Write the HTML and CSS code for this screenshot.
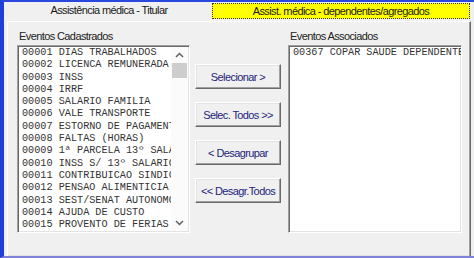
FILE: index.html
```html
<!DOCTYPE html>
<html>
<head>
	<meta charset="utf-8">
	<link rel="stylesheet" href="styles.css">
</head>
<body>
<div class="window">
	<div class="tabs">
		<div class="tab">Assistência médica - Titular</div>
		<div class="tab active"><span>Assist. médica - dependentes/agregados</span></div>
	</div>
	<div class="panel">
		<div class="col col-left">
			<div class="label">Eventos Cadastrados</div>
			<div class="listbox">
				<ul class="items">
					<li>00001 DIAS TRABALHADOS</li>
					<li>00002 LICENCA REMUNERADA</li>
					<li>00003 INSS</li>
					<li>00004 IRRF</li>
					<li>00005 SALARIO FAMILIA</li>
					<li>00006 VALE TRANSPORTE</li>
					<li>00007 ESTORNO DE PAGAMENTO</li>
					<li>00008 FALTAS (HORAS)</li>
					<li>00009 1ª PARCELA 13º SALARIO</li>
					<li>00010 INSS S/ 13º SALARIO</li>
					<li>00011 CONTRIBUICAO SINDICAL</li>
					<li>00012 PENSAO ALIMENTICIA</li>
					<li>00013 SEST/SENAT AUTONOMO</li>
					<li>00014 AJUDA DE CUSTO</li>
					<li>00015 PROVENTO DE FERIAS</li>
				</ul>
				<div class="scrollbar">
					<div class="arrow">
						<svg width="9" height="6" viewBox="0 0 9 6"><polyline points="1,5 4.5,1.5 8,5" fill="none" stroke="#606060" stroke-width="1.5"/></svg>
					</div>
					<div class="track"><div class="thumb"></div></div>
					<div class="arrow">
						<svg width="9" height="6" viewBox="0 0 9 6"><polyline points="1,1 4.5,4.5 8,1" fill="none" stroke="#606060" stroke-width="1.5"/></svg>
					</div>
				</div>
			</div>
		</div>
		<div class="buttons">
			<button class="btn">Selecionar &gt;</button>
			<button class="btn">Selec. Todos &gt;&gt;</button>
			<button class="btn">&lt; Desagrupar</button>
			<button class="btn">&lt;&lt; Desagr.Todos</button>
		</div>
		<div class="col col-right">
			<div class="label">Eventos Associados</div>
			<div class="listbox">
				<ul class="items">
					<li>00367 COPAR SAUDE DEPENDENTE</li>
				</ul>
			</div>
		</div>
	</div>
</div>
</body>
</html>
```

FILE: styles.css
```css
	body {
		margin: 0;
		background: #f0f0f0;
		font-family: "Liberation Sans", Arial, sans-serif;
		font-size: 11px;
		letter-spacing: -0.6px;
		color: #1a1a1a;
	}

	.window {
		box-sizing: border-box;
		width: 474px;
		height: 258px;
		border-left: 4px solid #1f3fdc;
		border-top: 2px solid #2a48e0;
		border-bottom: 2px solid #7f82d8;
		padding-left: 3px;
		background: #f0f0f0;
		display: flex;
		flex-direction: column;
	}

	.tabs {
		display: flex;
		height: 19px;
		padding-left: 1px;
	}

	.tab {
		width: 202px;
		text-align: center;
		line-height: 17px;
	}

	.tab.active {
		width: 258px;
		margin-left: 2px;
		padding-top: 1px;
	}

	.tab.active span {
		display: block;
		height: 14px;
		line-height: 14px;
		background: #ffff00;
		border: 1px dotted #333;
	}

	.panel {
		flex: 1;
		width: 464px;
		box-sizing: border-box;
		border-top: 1px solid #ffffff;
		border-left: 1px solid #ffffff;
		border-right: 1px solid #696969;
		box-shadow: inset -1px 0 #a0a0a0, inset 0 -1px #e3e3e3;
		display: flex;
		padding: 8px 0 0 9px;
	}

	.col {
		display: flex;
		flex-direction: column;
	}

	.col-left {
		width: 173px;
	}

	.col-right {
		width: 174px;
		margin-left: 7px;
	}

	.label {
		height: 15px;
		line-height: 13px;
		padding-left: 2px;
		color: #222;
	}

	.listbox {
		box-sizing: border-box;
		height: 188px;
		background: #ffffff;
		border-top: 1px solid #a0a0a0;
		border-left: 1px solid #a0a0a0;
		border-right: 1px solid #ffffff;
		border-bottom: 1px solid #ffffff;
		box-shadow: inset 1px 1px #696969, inset -1px -1px #e3e3e3;
		display: flex;
		overflow: hidden;
	}

	.items {
		flex: 1;
		list-style: none;
		margin: 0;
		padding: 1px 0 0 4px;
		font-family: "Liberation Mono", "Courier New", monospace;
		font-size: 10.2px;
		letter-spacing: 0;
		line-height: 12.3px;
		color: #333;
		white-space: nowrap;
		overflow: hidden;
	}

	.scrollbar {
		width: 17px;
		margin: 1px 1px 1px 0;
		display: flex;
		flex-direction: column;
		background: #fbfbfb;
	}

	.arrow {
		height: 16px;
		display: flex;
		align-items: center;
		justify-content: center;
	}

	.track {
		flex: 1;
	}

	.thumb {
		height: 15px;
		margin: 0 1px;
		background: #cdcdcd;
	}

	.buttons {
		display: flex;
		flex-direction: column;
		gap: 13px;
		margin-left: 5px;
		padding-top: 34px;
	}

	.btn {
		width: 86px;
		height: 25px;
		padding: 0;
		font-family: inherit;
		font-size: 11px;
		letter-spacing: -0.6px;
		color: #24247a;
		background: #f0f0f0;
		border-top: 1px solid #ffffff;
		border-left: 1px solid #ffffff;
		border-right: 1px solid #696969;
		border-bottom: 1px solid #696969;
		box-shadow: inset -1px -1px #a0a0a0, inset 1px 1px #e3e3e3;
	}
```
